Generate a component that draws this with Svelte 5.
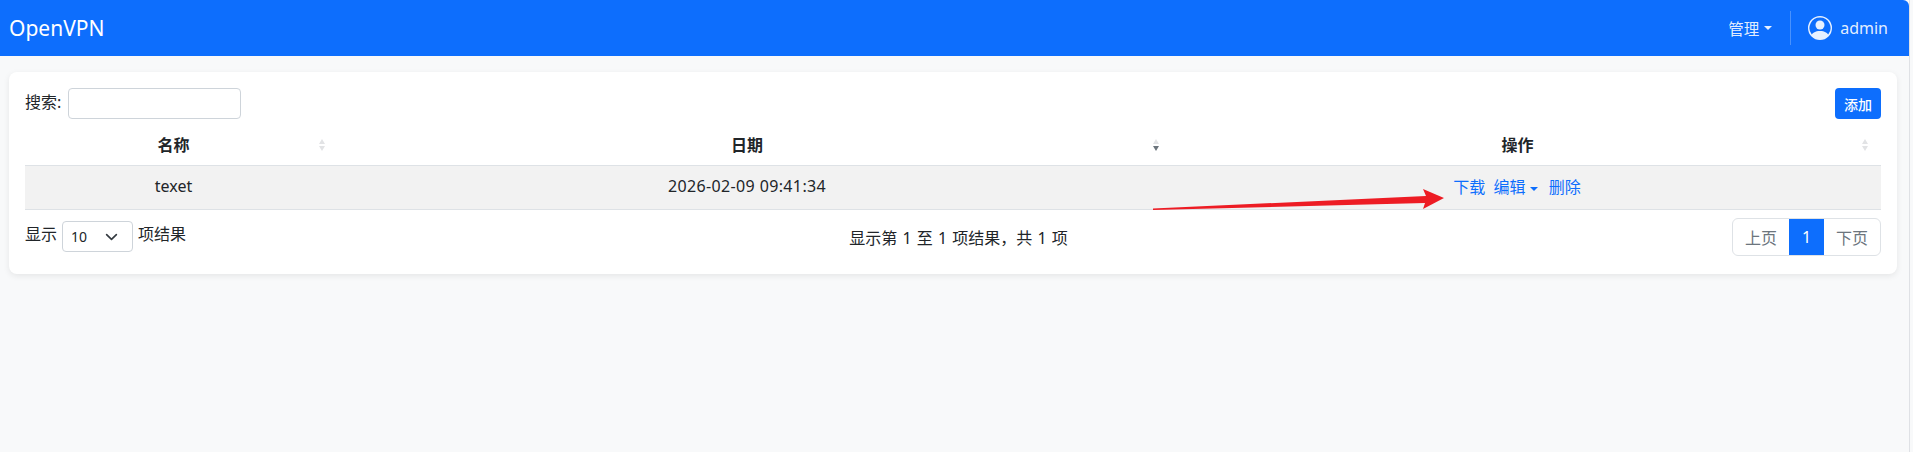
<script>
  let search = "";
  let pageSize = "10";
  const rows = [{ name: "texet", date: "2026-02-09 09:41:34" }];
</script>

<div class="page">
  <nav class="navbar">
    <span class="brand">OpenVPN</span>
    <div class="nav-right">
      <span class="nav-link">管理<i class="caret"></i></span>
      <span class="divider"></span>
      <span class="user">
        <svg width="24" height="24" viewBox="0 0 16 16" fill="currentColor">
          <path d="M11 6a3 3 0 1 1-6 0 3 3 0 0 1 6 0" />
          <path fill-rule="evenodd" d="M0 8a8 8 0 1 1 16 0A8 8 0 0 1 0 8m8-7a7 7 0 0 0-5.468 11.37C3.242 11.226 4.805 10 8 10s4.757 1.225 5.468 2.37A7 7 0 0 0 8 1" />
        </svg>
        admin
      </span>
    </div>
  </nav>

  <main class="content">
    <div class="card">
      <div class="toolbar">
        <label class="search">搜索:<input type="text" bind:value={search} /></label>
        <button class="add">添加</button>
      </div>

      <table>
        <colgroup>
          <col class="c1" />
          <col class="c2" />
          <col class="c3" />
        </colgroup>
        <thead>
          <tr>
            <th>名称<span class="sort"><b></b><u></u></span></th>
            <th>日期<span class="sort desc"><b></b><u></u></span></th>
            <th>操作<span class="sort"><b></b><u></u></span></th>
          </tr>
        </thead>
        <tbody>
          {#each rows as row}
            <tr>
              <td>{row.name}</td>
              <td class="date">{row.date}</td>
              <td class="actions">
                <a href="#top">下载</a>
                <a href="#top" class="edit">编辑<i class="caret"></i></a>
                <a href="#top">删除</a>
              </td>
            </tr>
          {/each}
        </tbody>
      </table>

      <div class="footer">
        <div class="length">
          显示
          <span class="select">
            <select bind:value={pageSize}>
              <option>10</option>
              <option>25</option>
              <option>50</option>
            </select>
            <svg width="16" height="16" viewBox="0 0 16 16"><path d="m2 5 6 6 6-6" fill="none" stroke="#343a40" stroke-width="2" stroke-linecap="round" stroke-linejoin="round" /></svg>
          </span>
          项结果
        </div>
        <div class="info">显示第 1 至 1 项结果，共 1 项</div>
        <div class="pager">
          <span class="pg">上页</span>
          <span class="pg on">1</span>
          <span class="pg">下页</span>
        </div>
      </div>
    </div>
  </main>

  <!-- red annotation arrow drawn over the screenshot -->
  <svg class="arrow" width="300" height="30" viewBox="0 0 300 30">
    <path d="M0 23.6 L273 11 L270 4 L291 13 L270 24 L272 18 L0 25 Z" fill="#ed1c24" />
  </svg>
</div>

<style>
  :global(body) {
    margin: 0;
    background: #f8f9fa;
    font-family: "Noto Sans", "Noto Sans CJK SC", sans-serif;
    font-size: 16px;
    color: #212529;
  }
  .page {
    position: relative;
    width: 1910px;
    height: 452px;
    box-sizing: border-box;
    background: #f8f9fa;
    border-right: 1px solid #dfe1e5;
    overflow: hidden;
  }
  .navbar {
    height: 56px;
    background: #0d6efd;
    color: #fff;
    display: flex;
    align-items: center;
    justify-content: space-between;
    padding: 0 9px;
    border-top-right-radius: 6px;
  }
  .brand {
    font-size: 21px;
  }
  .nav-right {
    display: flex;
    align-items: center;
    color: rgba(255, 255, 255, 0.9);
  }
  .nav-link {
    display: inline-flex;
    align-items: center;
    font-size: 15.5px;
  }
  .caret {
    display: inline-block;
    margin-left: 5px;
    border-top: 4px solid currentColor;
    border-left: 4px solid transparent;
    border-right: 4px solid transparent;
  }
  .divider {
    width: 1px;
    height: 34px;
    background: rgba(255, 255, 255, 0.25);
    margin: 0 17px 0 18px;
  }
  .user {
    display: inline-flex;
    align-items: center;
    gap: 8px;
    margin-right: 12px;
  }
  .content {
    padding: 16px 12px 0 9px;
  }
  .card {
    background: #fff;
    border-radius: 8px;
    box-shadow: 0 2px 6px rgba(0, 0, 0, 0.08);
    padding: 16px;
    height: 170px;
  }
  .toolbar {
    display: flex;
    justify-content: space-between;
    align-items: center;
    height: 31px;
  }
  .search {
    display: flex;
    align-items: flex-start;
    gap: 7px;
    line-height: 28px;
  }
  .search input {
    width: 173px;
    height: 31px;
    box-sizing: border-box;
    border: 1px solid #ced4da;
    border-radius: 4px;
    outline: none;
  }
  .add {
    width: 46px;
    height: 31px;
    border: 0;
    border-radius: 4px;
    background: #0d6efd;
    color: #fff;
    font: inherit;
    font-size: 14px;
    font-weight: 500;
    padding: 0;
  }
  table {
    table-layout: fixed;
    width: 1856px;
    border-collapse: collapse;
    margin-top: 8px;
  }
  .c1 { width: 313px; }
  .c2 { width: 834px; }
  .c3 { width: 709px; }
  th, td {
    text-align: center;
    padding: 0 24px 0 8px;
    position: relative;
  }
  th {
    height: 38px;
    box-sizing: border-box;
    font-weight: 700;
    border-bottom: 1px solid #dee2e6;
    padding-bottom: 3px;
  }
  th:last-child {
    padding-right: 26px;
  }
  td {
    height: 44px;
    box-sizing: border-box;
    background: #f2f2f2;
    border-bottom: 1px solid #dee2e6;
    padding-bottom: 3px;
  }
  .date {
    letter-spacing: 0.37px;
  }
  .sort {
    position: absolute;
    right: 13px;
    top: 50%;
    margin-top: -7px;
    display: flex;
    flex-direction: column;
    gap: 2px;
  }
  .sort b, .sort u {
    display: block;
    border-left: 3px solid transparent;
    border-right: 3px solid transparent;
  }
  .sort b { border-bottom: 5px solid #e2e3e5; }
  .sort u { border-top: 5px solid #e2e3e5; }
  .sort.desc u { border-top-color: #6c757d; }
  .actions {
    padding-bottom: 3px;
    padding-right: 27px;
  }
  .actions a {
    color: #0d6efd;
    text-decoration: none;
    margin: 0 2px;
  }
  .actions .edit {
    margin-right: 5px;
  }
  .actions .caret {
    vertical-align: 2px;
    margin-left: 4px;
  }
  .footer {
    display: grid;
    grid-template-columns: 1fr 1fr 1fr;
    align-items: center;
    margin-top: 8px;
  }
  .length {
    display: flex;
    align-items: flex-start;
    gap: 5px;
    line-height: 27px;
  }
  .select {
    position: relative;
    display: inline-block;
    height: 31px;
  }
  .select select {
    appearance: none;
    width: 71px;
    height: 31px;
    background: #fff;
    border: 1px solid #ced4da;
    border-radius: 4px;
    padding: 0 0 0 8px;
    font: inherit;
    font-size: 14px;
    color: inherit;
  }
  .select svg {
    position: absolute;
    right: 15px;
    top: 8px;
    width: 13px;
    height: 16px;
  }
  .info {
    text-align: center;
    margin-left: 11px;
    word-spacing: 1px;
  }
  .pager {
    justify-self: end;
    display: flex;
    height: 38px;
    border: 1px solid #dee2e6;
    border-radius: 6px;
    box-sizing: border-box;
    overflow: hidden;
    color: #6c757d;
  }
  .pg {
    display: flex;
    align-items: center;
    justify-content: center;
    width: 56px;
  }
  .pg.on {
    width: 35px;
    background: #0d6efd;
    color: #fff;
  }
  .arrow {
    position: absolute;
    left: 1153px;
    top: 185px;
  }
</style>
